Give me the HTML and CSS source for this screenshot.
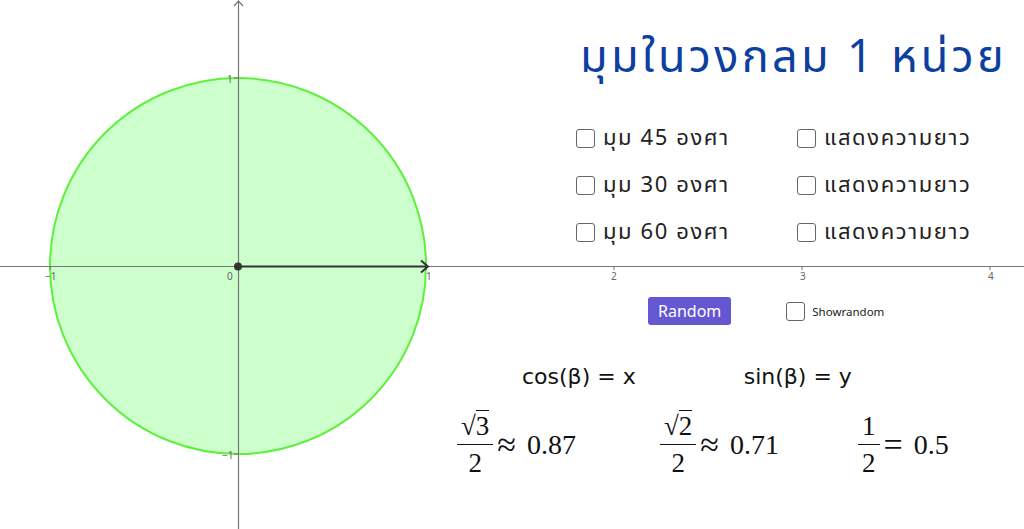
FILE: index.html
```html
<!DOCTYPE html>
<html lang="th">
<head>
  <meta charset="UTF-8">
  <title>มุมในวงกลม 1 หน่วย</title>
  <link rel="stylesheet" href="styles.css">
</head>
<body>
<div class="applet">
  <svg class="graph" width="1024" height="529" viewBox="0 0 1024 529">
    <!-- unit circle, origin (238,266), 1 unit = 188px -->
    <circle cx="238" cy="266" r="188" fill="#ccffcc" stroke="#5ef03c" stroke-width="2"/>
    <!-- axes -->
    <line x1="0" y1="266.5" x2="1024" y2="266.5" stroke="#777" stroke-width="1.2"/>
    <line x1="238.5" y1="2" x2="238.5" y2="529" stroke="#777" stroke-width="1.2"/>
    <path d="M234 6 L238.5 1 L243 6" fill="none" stroke="#777" stroke-width="1.2"/>
    <g stroke="#777" stroke-width="1">
      <line x1="50" y1="266" x2="50" y2="270"/>
      <line x1="426" y1="266" x2="426" y2="270"/>
      <line x1="614" y1="266" x2="614" y2="270"/>
      <line x1="802" y1="266" x2="802" y2="270"/>
      <line x1="990" y1="266" x2="990" y2="270"/>
      <line x1="234" y1="78" x2="238" y2="78"/>
      <line x1="234" y1="454" x2="238" y2="454"/>
    </g>
    <g class="tick-labels">
      <text x="45" y="280">−1</text>
      <text x="227" y="280">0</text>
      <text x="426" y="280">1</text>
      <text x="611" y="280">2</text>
      <text x="800" y="280">3</text>
      <text x="988" y="280">4</text>
      <text x="227" y="83">1</text>
      <text x="222" y="459">−1</text>
    </g>
    <!-- vector -->
    <line x1="238" y1="266.5" x2="426" y2="266.5" stroke="#333" stroke-width="2"/>
    <path d="M421 260.5 L428 266.5 L421 272.5" fill="none" stroke="#333" stroke-width="2"/>
    <circle cx="238" cy="266.5" r="4" fill="#333"/>
  </svg>

  <h1 class="title">มุมในวงกลม 1 หน่วย</h1>

  <div class="options">
    <label class="check"><span class="box"></span>มุม 45 องศา</label>
    <label class="check"><span class="box"></span>แสดงความยาว</label>
    <label class="check"><span class="box"></span>มุม 30 องศา</label>
    <label class="check"><span class="box"></span>แสดงความยาว</label>
    <label class="check"><span class="box"></span>มุม 60 องศา</label>
    <label class="check"><span class="box"></span>แสดงความยาว</label>
  </div>

  <div class="controls">
    <button type="button" class="random">Random</button>
    <label class="check small"><span class="box"></span>Showrandom</label>
  </div>

  <div class="eqs">
    <span>cos(β) = x</span>
    <span>sin(β) = y</span>
  </div>

  <div class="fracs">
    <div class="expr">
      <span class="frac"><span class="num">√<span class="rad">3</span></span><span class="den">2</span></span>
      <span class="rel">≈</span>
      <span class="val">0.87</span>
    </div>
    <div class="expr">
      <span class="frac"><span class="num">√<span class="rad">2</span></span><span class="den">2</span></span>
      <span class="rel">≈</span>
      <span class="val">0.71</span>
    </div>
    <div class="expr">
      <span class="frac"><span class="num">1</span><span class="den">2</span></span>
      <span class="rel">=</span>
      <span class="val">0.5</span>
    </div>
  </div>
</div>
</body>
</html>
```

FILE: styles.css
```css
* {
  box-sizing: border-box;
}
body {
  margin: 0;
  background: white;
  font-family: "Noto Sans Thai", "Noto Sans", "DejaVu Sans", sans-serif;
}
.applet {
  position: relative;
  width: 1024px;
  height: 529px;
  overflow: hidden;
}
.graph {
  position: absolute;
  left: 0;
  top: 0;
}
.tick-labels {
  font-family: "Noto Sans", sans-serif;
  font-size: 10px;
  fill: #666;
}

/* objects on the canvas */
.title {
  position: absolute;
  left: 580px;
  top: 24px;
  margin: 0;
  font-size: 45px;
  font-weight: normal;
  letter-spacing: 3.3px;
  color: #0d3fa0;
  white-space: nowrap;
}
.options {
  position: absolute;
  left: 576px;
  top: 121px;
  display: grid;
  grid-template-columns: 221px auto;
  row-gap: 13px;
}
.check {
  display: flex;
  align-items: center;
  gap: 8px;
  font-size: 22px;
  letter-spacing: 1.6px;
  color: #222;
  white-space: nowrap;
  height: 34px;
}
.box {
  flex: none;
  width: 19px;
  height: 19px;
  border: 1.5px solid #666;
  border-radius: 3px;
  background: white;
}
.controls {
  position: absolute;
  left: 648px;
  top: 297px;
  display: flex;
  align-items: center;
  gap: 55px;
}
.random {
  background: #6557d2;
  color: white;
  border: none;
  border-radius: 3px;
  font-family: "Noto Sans", sans-serif;
  font-size: 16px;
  padding: 2px 10px;
  height: 28px;
}
.check.small {
  font-family: "Noto Sans", sans-serif;
  font-size: 11.5px;
  letter-spacing: 0;
  gap: 7px;
  height: 24px;
}
.eqs {
  position: absolute;
  left: 522px;
  top: 364px;
  display: flex;
  gap: 108px;
  font-family: "DejaVu Sans", sans-serif;
  font-size: 22px;
  color: #111;
}
.fracs {
  position: absolute;
  left: 457px;
  top: 411px;
  display: flex;
  font-family: "Liberation Serif", serif;
  color: #111;
}
.expr {
  display: flex;
  align-items: center;
}
.expr:nth-child(1) {
  width: 203px;
}
.expr:nth-child(2) {
  width: 198px;
}
.frac {
  display: flex;
  flex-direction: column;
  align-items: center;
  font-size: 27px;
  line-height: 30px;
}
.num {
  padding: 0 4px 3px;
  border-bottom: 1.2px solid #111;
}
.rad {
  border-top: 1.2px solid #111;
}
.den {
  padding-top: 3px;
}
.rel {
  font-size: 34px;
  line-height: 1;
  margin: 0 11px 0 4px;
}
.val {
  font-size: 28px;
}
```
